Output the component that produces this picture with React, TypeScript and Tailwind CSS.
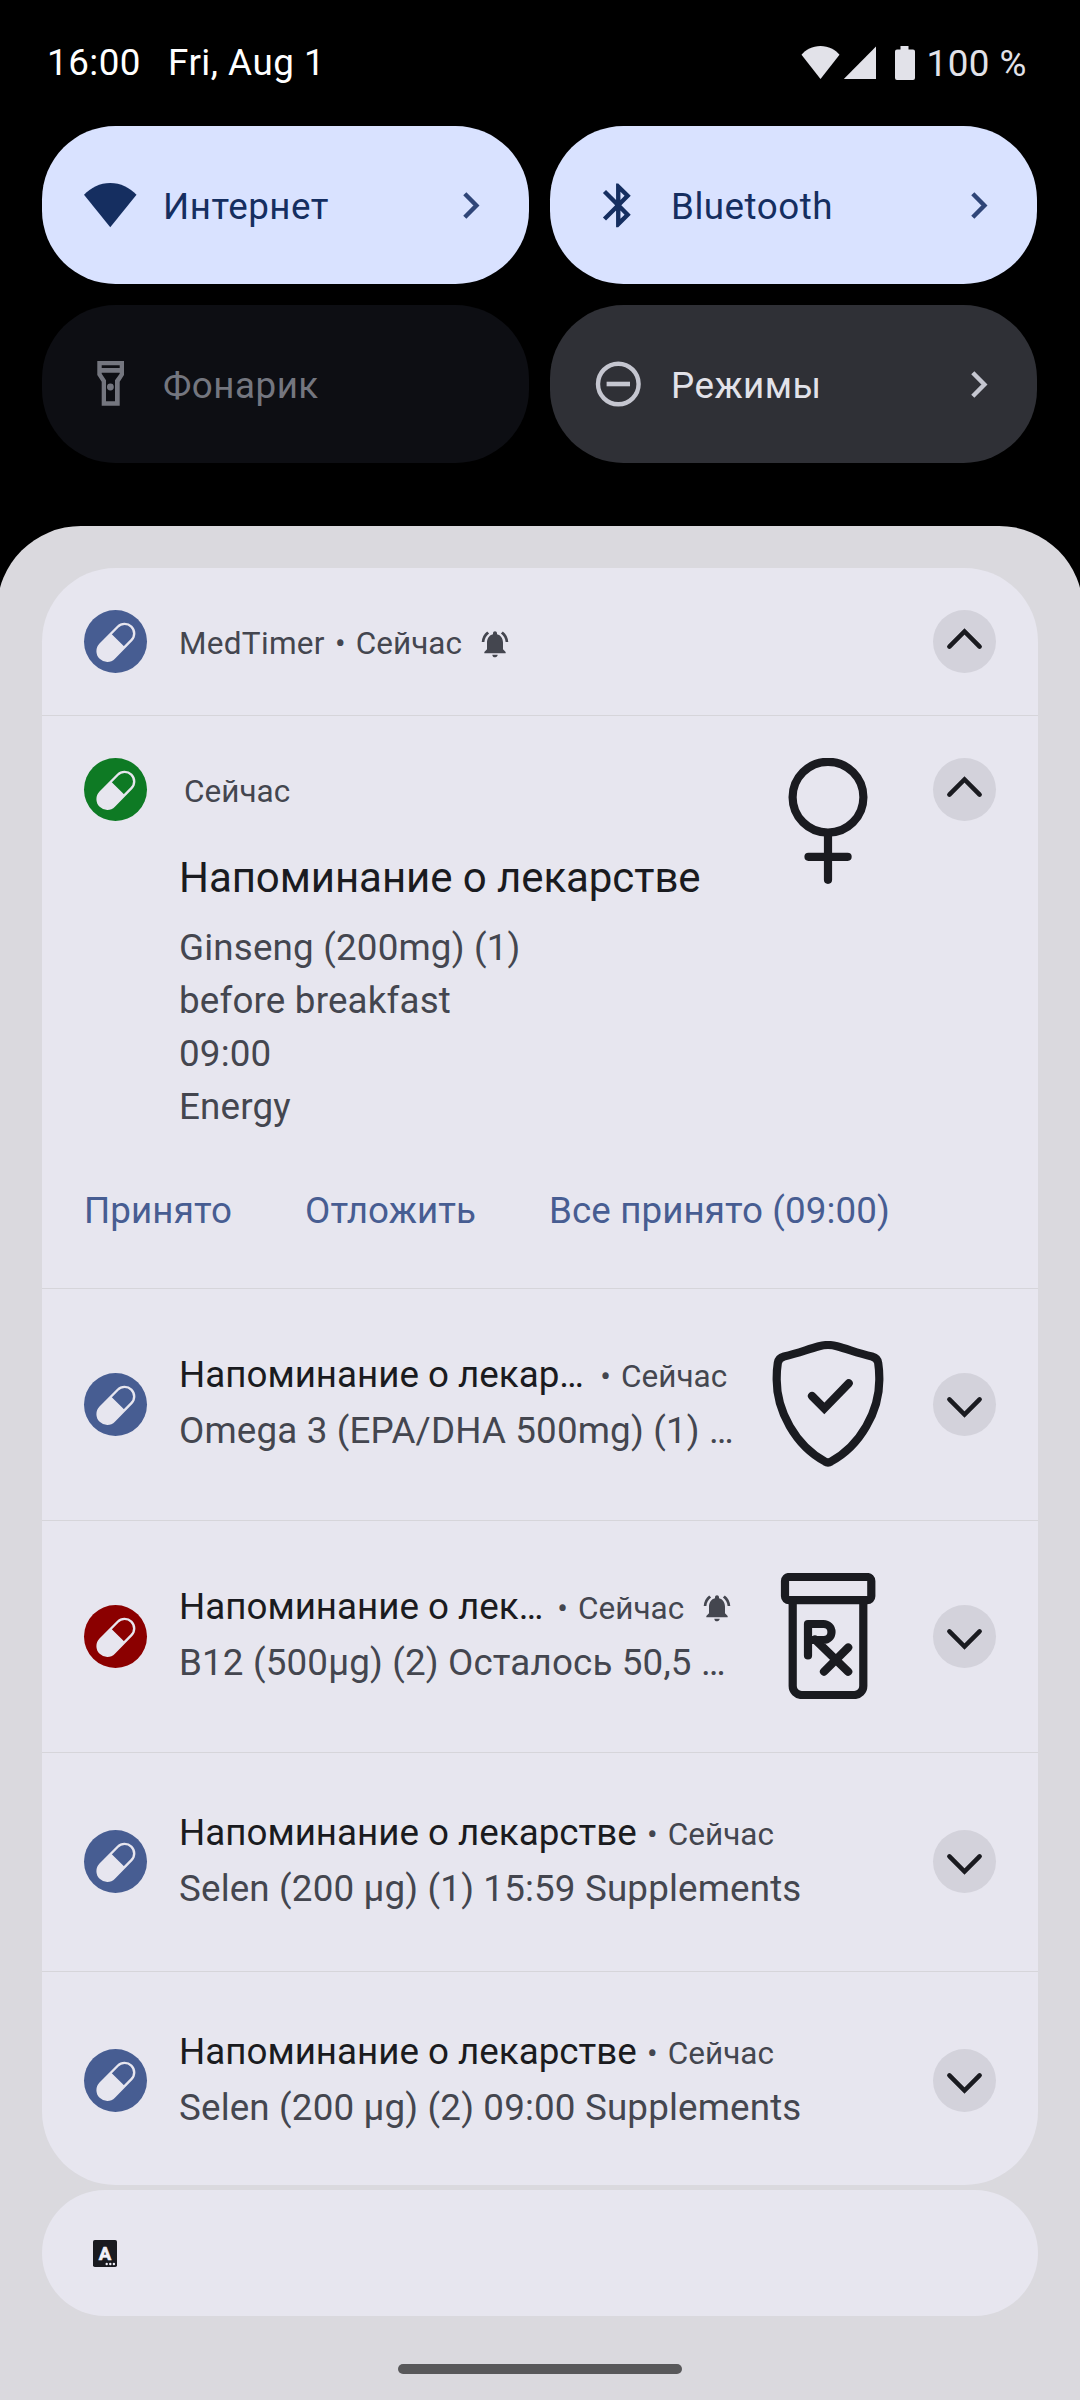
import React from "react";
import type { ReactNode } from "react";

const WIFI = "M12 22 L0 7.2 C3.1 3.9 7.3 1.8 12 1.8 C16.7 1.8 20.9 3.9 24 7.2 Z";

function Wifi({ className }: { className?: string }) {
  return (
    <svg viewBox="0 0 24 24" className={className} fill="currentColor">
      <path d={WIFI} />
    </svg>
  );
}

function Bluetooth() {
  return (
    <svg viewBox="0 0 24 24" className="size-[52.5px]" fill="currentColor">
      <path d="M17.71 7.71L12 2h-1v7.59L6.41 5 5 6.41 10.59 12 5 17.59 6.41 19 11 14.41V22h1l5.71-5.71-4.3-4.29 4.3-4.29zM13 5.83l1.88 1.88L13 9.59V5.83zm1.88 10.46L13 18.17v-3.76l1.88 1.88z" />
    </svg>
  );
}

function Flashlight() {
  return (
    <svg viewBox="0 0 52.5 52.5" className="size-[52.5px]" fill="currentColor">
      <path
        fillRule="evenodd"
        d="M13.3 3H40V17L35.7 23.7V47.7H17.7V23.7L13.3 17ZM17.7 7.3H35.7V10H17.7ZM17.7 14.7H35.7V15.8L31 22.3V43.3H22V22.3L17.7 15.8Z"
      />
      <circle cx="26.4" cy="29" r="3.4" />
    </svg>
  );
}

function Modes() {
  return (
    <svg viewBox="0 0 52.5 52.5" className="size-[52.5px]" fill="none" stroke="currentColor">
      <circle cx="26.3" cy="26" r="20.3" strokeWidth="4.4" />
      <path d="M14.6 26H38" strokeWidth="4.6" />
    </svg>
  );
}

function TileChevron({ className }: { className: string }) {
  return (
    <svg viewBox="0 0 17 27" className={`h-[27px] w-[17px] ${className}`} fill="none" stroke="currentColor" strokeWidth="4.4">
      <path d="M1.8 1.8L13.4 13.5L1.8 25.2" />
    </svg>
  );
}

function Tile({ label, icon, className, chevron }: { label: string; icon: ReactNode; className: string; chevron?: string }) {
  return (
    <div className={`flex h-[158px] w-[487px] items-center rounded-[73.5px] pl-[42px] pr-[49px] ${className}`}>
      <span className="shrink-0">{icon}</span>
      <span className="ml-[26.5px] mt-[3px] flex-1 text-[36.75px] leading-[44px] tracking-[0.5px]">{label}</span>
      {chevron && <TileChevron className={chevron} />}
    </div>
  );
}

function PillBadge({ className }: { className: string }) {
  return (
    <div className={`size-[63px] shrink-0 rounded-full ${className}`}>
      <svg viewBox="0 0 63 63" className="size-full text-[#e7e6ef]">
        <g transform="translate(31.9 32.3) rotate(-45.5)">
          <rect x="-22" y="-9.6" width="44" height="19.2" rx="9.6" fill="none" stroke="currentColor" strokeWidth="2.4" />
          <path d="M2.8 -9.6H-12.4A9.6 9.6 0 0 0 -12.4 9.6H2.8Z" fill="currentColor" />
        </g>
      </svg>
    </div>
  );
}

function ExpandButton({ open }: { open?: boolean }) {
  return (
    <div className="size-[63px] shrink-0 rounded-full bg-[#d3d2db]">
      <svg viewBox="0 0 63 63" className="size-full" fill="none" stroke="#1a1b20" strokeWidth="4.6" strokeLinecap="round">
        <path d={open ? "M16.4 36.6L31.5 21.4L46.6 36.6" : "M16.4 26.4L31.5 41.6L46.6 26.4"} />
      </svg>
    </div>
  );
}

function Bell() {
  return (
    <svg viewBox="0 0 24 24" className="size-[32px] shrink-0" fill="#44464f">
      <path d="M7.58 4.08L6.15 2.65C3.75 4.48 2.17 7.3 2.03 10.5h2c.15-2.65 1.51-4.97 3.55-6.42zm12.39 6.42h2c-.15-3.2-1.73-6.02-4.12-7.85l-1.42 1.43c2.02 1.45 3.39 3.77 3.54 6.42zM18 11c0-3.07-1.64-5.64-4.5-6.32V4c0-.83-.67-1.5-1.5-1.5s-1.5.67-1.5 1.5v.68C7.63 5.36 6 7.92 6 11v5l-2 2v1h16v-1l-2-2v-5zm-6 11c.14 0 .27-.01.4-.04.65-.14 1.18-.58 1.44-1.18.1-.24.15-.5.15-.78h-4c.01 1.1.9 2 2.01 2z" />
    </svg>
  );
}

function MedIcon({ children }: { children: ReactNode }) {
  return (
    <svg viewBox="0 0 126 126" className="size-[126px] shrink-0" fill="none" stroke="#1a1b20" strokeWidth="8.2" strokeLinecap="round">
      {children}
    </svg>
  );
}

function Dot() {
  return <span className="w-[31px] text-center">•</span>;
}

interface RowProps {
  badge: string;
  title: string;
  titleWidth?: string;
  body: string;
  height: string;
  bell?: boolean;
  icon?: ReactNode;
}

function Row({ badge, title, titleWidth = "", body, height, bell, icon }: RowProps) {
  return (
    <div className={`flex border-t border-[#d6d5da] px-[42px] ${height}`}>
      <PillBadge className={badge} />
      <div className={`ml-8 min-w-0 flex-1 whitespace-nowrap ${icon ? "-mt-[26px]" : "-mt-[25px]"}`}>
        <div className="flex h-14 items-baseline text-[31.5px] leading-[56px] text-[#44464f]">
          <span className={`text-[36.75px] text-[#1a1b20] ${titleWidth}`}>{title}</span>
          <Dot />
          <span>Сейчас</span>
          {bell && (
            <span className="ml-[17px] self-center pt-0.5">
              <Bell />
            </span>
          )}
        </div>
        <p className="text-[36.75px] leading-[56px] tracking-[0.16px] text-[#44464f]">{body}</p>
      </div>
      {icon && <div className="-mt-8 mr-[42px]">{icon}</div>}
      <ExpandButton />
    </div>
  );
}

const tallRow = "h-[232px] pt-[84px]";
const blue = "bg-[#475d92]";

export default function App() {
  return (
    <div className="flex h-[2400px] w-[1080px] flex-col overflow-hidden bg-black font-['Roboto',sans-serif]">
      <header className="flex h-[126px] items-start pl-[47px] pr-[53px] pt-[40px] text-[36.75px] leading-[45px] tracking-[0.5px] text-white">
        <span>16:00</span>
        <span className="ml-[27px] flex-1">Fri, Aug 1</span>
        <div className="flex items-start pt-px text-[#e2e2e9]">
          <svg viewBox="0 0 116 36" className="mr-[9.5px] mt-[4px] h-[36px] w-[116px]" fill="currentColor">
            <path d="M19.5 34L.5 9.8C4.5 4.8 11.5 1 19.5 1S34.5 4.8 38.5 9.8Z" />
            <path d="M42.8 34L75 1.5V34Z" />
            <path d="M99.5 1h8v3.5h4.5a2 2 0 0 1 2 2V33a2 2 0 0 1-2 2H96a2 2 0 0 1-2-2V6.500a2 2 0 0 1 2-2h3.500Z" />
          </svg>
          <span>100 %</span>
        </div>
      </header>

      <section className="grid grid-cols-[487px_487px] gap-[21px] pl-[42px]">
        <Tile label="Интернет" icon={<Wifi className="size-[52.5px]" />} className="bg-[#d9e2ff] text-[#152e60]" chevron="text-[#2f4578]" />
        <Tile label="Bluetooth" icon={<Bluetooth />} className="bg-[#d9e2ff] text-[#152e60]" chevron="text-[#2f4578]" />
        <Tile label="Фонарик" icon={<Flashlight />} className="bg-[#0d0e13] text-[#74767f]" />
        <Tile
          label="Режимы"
          icon={
            <span className="text-[#c5c6d0]">
              <Modes />
            </span>
          }
          className="bg-[#2f3036] text-[#e2e2e9]"
          chevron="text-[#c5c6d0]"
        />
      </section>

      <main className="-mx-[3px] mt-[63px] flex flex-1 flex-col items-center rounded-t-[84px] bg-[#dad9de] pt-[42px]">
        <div className="h-[1617px] w-[996px] overflow-hidden rounded-[73.5px] bg-[#e7e6ef]">
          <div className="flex h-[147px] px-[42px] pt-[42px]">
            <PillBadge className={blue} />
            <div className="ml-8 flex h-[67px] flex-1 items-center text-[31.5px] leading-[40px] text-[#44464f]">
              <span className="tracking-[0.3px]">MedTimer</span>
              <Dot />
              <span>Сейчас</span>
              <span className="ml-[17px]">
                <Bell />
              </span>
            </div>
            <ExpandButton open />
          </div>

          <div className="h-[573px] border-t border-[#d6d5da] px-[42px] pt-[42px]">
            <div className="flex h-[386px]">
              <PillBadge className="bg-[#0e7a24]" />
              <div className="ml-8 flex-1">
                <p className="ml-[5px] h-[93px] pt-[14px] text-[31.5px] leading-[40px] text-[#44464f]">Сейчас</p>
                <h2 className="h-[70px] text-[42px] leading-[54px] tracking-[-0.07px] text-[#1a1b20]">Напоминание о лекарстве</h2>
                <div className="text-[36.75px] leading-[53px] tracking-[0.18px] text-[#44464f]">
                  <p>Ginseng (200mg) (1)</p>
                  <p>before breakfast</p>
                  <p>09:00</p>
                  <p>Energy</p>
                </div>
              </div>
              <div className="mr-[42px]">
                <MedIcon>
                  <circle cx="63" cy="39.2" r="35.4" />
                  <path d="M63 75V121.800M43.500 98.800H82.600" />
                </MedIcon>
              </div>
              <ExpandButton open />
            </div>
            <div className="mt-[45px] flex text-[36.75px] leading-[44px] tracking-[0.1px] text-[#475d92]">
              <span className="w-[221px]">Принято</span>
              <span className="w-[244px]">Отложить</span>
              <span>Все принято (09:00)</span>
            </div>
          </div>

          <Row
            badge={blue}
            title="Напоминание о лекар…"
            titleWidth="w-[411px]"
            body="Omega 3 (EPA/DHA 500mg) (1) …"
            height={tallRow}
            icon={
              <MedIcon>
                <path
                  strokeLinecap="butt"
                  d="M54 5.200Q63 2.800 72 5.200C84 8.500 92 11.800 107 15.500Q112.500 17 113.200 22C114 27 114.300 32 114.300 37C115 70 95 105 66 120.500Q63 122.500 60 120.500C31 105 11 70 11.700 37C11.700 32 12 27 12.800 22Q13.500 17 19 15.500C34 11.800 42 8.500 54 5.200Z"
                />
                <path d="M47 55L59.300 67.500L83.700 42.300" />
              </MedIcon>
            }
          />
          <Row
            badge="bg-[#8b0000]"
            title="Напоминание о лек…"
            titleWidth="w-[368px]"
            body="B12 (500µg) (2) Осталось 50,5 …"
            height={tallRow}
            bell
            icon={
              <MedIcon>
                <rect x="20" y="4" width="86.300" height="23.200" rx="4" />
                <path d="M27.700 28V113a9 9 0 0 0 9 9H89.300a9 9 0 0 0 9-9V28" />
                <path strokeLinejoin="round" d="M43 82.500V51H58.500a8 8 0 0 1 0 16H44M50 66.500L83.200 98.700M83.200 74.500L59 98.700" />
              </MedIcon>
            }
          />
          <Row badge={blue} title="Напоминание о лекарстве" body="Selen (200 µg) (1) 15:59 Supplements" height="h-[219px] pt-[77px]" />
          <Row badge={blue} title="Напоминание о лекарстве" body="Selen (200 µg) (2) 09:00 Supplements" height="h-[214px] pt-[77px]" />
        </div>

        <div className="mt-[5px] flex h-[126px] w-[996px] items-center rounded-full bg-[#e7e6ef] pl-[51px]">
          <svg viewBox="0 0 24 27" className="h-[27px] w-[24px]">
            <rect width="24" height="27" rx="1.800" fill="#1a1b20" />
            <text
              x="12"
              y="20"
              textAnchor="middle"
              fontSize="18.500"
              fontWeight="700"
              fill="#f1f0f8"
              stroke="#f1f0f8"
              strokeWidth="0.700"
              strokeLinejoin="round"
              fontFamily="Roboto, sans-serif"
            >
              A
            </text>
            <g fill="#f1f0f8">
              <circle cx="13.700" cy="24" r="1.200" />
              <circle cx="17.300" cy="24" r="1.200" />
              <circle cx="20.900" cy="24" r="1.200" />
            </g>
          </svg>
        </div>

        <div className="mt-[48px] h-[10px] w-[284px] rounded-full bg-[#58585a]" />
      </main>
    </div>
  );
}
